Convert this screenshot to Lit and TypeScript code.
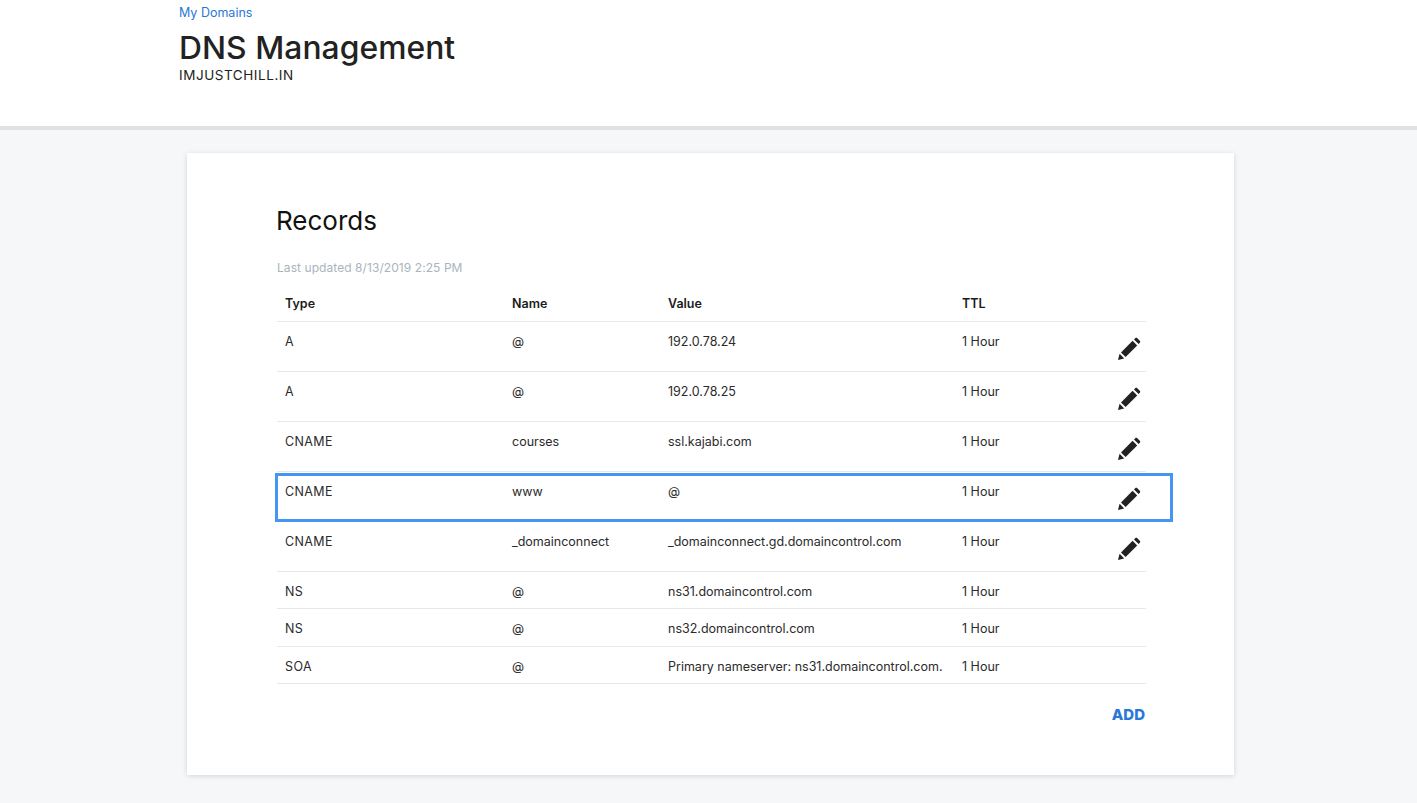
import { LitElement, html, css, svg } from "lit";
import { customElement } from "lit/decorators.js";

interface Rec { type: string; name: string; value: string; editable: boolean; focus?: boolean }

const RECORDS: Rec[] = [
  { type: "A", name: "@", value: "192.0.78.24", editable: true },
  { type: "A", name: "@", value: "192.0.78.25", editable: true },
  { type: "CNAME", name: "courses", value: "ssl.kajabi.com", editable: true },
  { type: "CNAME", name: "www", value: "@", editable: true, focus: true },
  { type: "CNAME", name: "_domainconnect", value: "_domainconnect.gd.domaincontrol.com", editable: true },
  { type: "NS", name: "@", value: "ns31.domaincontrol.com", editable: false },
  { type: "NS", name: "@", value: "ns32.domaincontrol.com", editable: false },
  { type: "SOA", name: "@", value: "Primary nameserver: ns31.domaincontrol.com.", editable: false },
];

const pencil = svg`<svg class="pencil" width="24" height="24" viewBox="0 0 24 24" aria-hidden="true">
  <path fill="#222" d="M1 23l1.6-6.2 4.6 4.6z"/>
  <path fill="#222" d="M4 15.4L15.6 3.8l4.6 4.6L8.6 20z"/>
  <path fill="#222" d="M17 2.4l1.2-1.2c.6-.6 1.5-.6 2.1 0l2.5 2.5c.6.6.6 1.5 0 2.1L21.600 7z"/>
</svg>`;

@customElement("app-root")
export class AppRoot extends LitElement {
  static styles = css`
    :host {
      display: block;
      min-height: 803px;
      background: #f5f7f8;
      font-family: "Inter", "Liberation Sans", sans-serif;
      color: #222;
    }
    .top {
      box-sizing: border-box;
      height: 130px;
      background: #fff;
      border-bottom: 4px solid #dfe1e3;
      padding: 5px 0 0 179px;
    }
    .crumb {
      display: block;
      font-size: 12.5px;
      line-height: 16px;
      color: #2a78d6;
      text-decoration: none;
    }
    h1 {
      margin: 7px 0 0;
      font-size: 31.8px;
      line-height: 39px;
      font-weight: 550;
      color: #222;
      letter-spacing: 0.05px;
    }
    .domain {
      font-size: 13.5px;
      line-height: 16px;
      letter-spacing: 0.55px;
      color: #222;
    }
    .card {
      box-sizing: border-box;
      width: 1047px;
      height: 622px;
      margin: 23px 0 0 187px;
      padding: 49px 88px 0 90px;
      background: #fff;
      box-shadow: 0 1px 5px rgba(0, 0, 0, 0.14);
    }
    h2 {
      margin: 0 0 0 -1px;
      font-size: 26px;
      line-height: 38px;
      font-weight: 400;
      color: #111;
    }
    .updated {
      margin-top: 20px;
      font-size: 12px;
      line-height: 16px;
      letter-spacing: 0.07px;
      color: #a9b4bc;
    }
    .row {
      position: relative;
      display: grid;
      grid-template-columns: 227px 156px 294px 1fr 28px;
      box-sizing: border-box;
      padding: 0 0 0 8px;
      border-bottom: 1px solid #e8e8e8;
      font-size: 12.5px;
      line-height: 16px;
      color: #2b2b2b;
    }
    .head {
      height: 38px;
      padding-top: 12px;
      margin-top: 8px;
      font-weight: 600;
      color: #1b1b1b;
    }
    .tall { height: 50px; padding-top: 12px; }
    .short { height: 37.4px; padding-top: 12px; }
    .cell { white-space: nowrap; }
    .type { letter-spacing: 0.4px; }
    .edit {
      display: flex;
      justify-content: flex-end;
      padding-top: 3px;
      padding-right: 5px;
    }
    .pencil { display: block; flex: none; }
    .focus {
      position: absolute;
      left: -2px;
      right: -27px;
      top: 1px;
      bottom: -1px;
      border: 3px solid #4694f3;
      pointer-events: none;
    }
    .actions { display: flex; justify-content: flex-end; margin-top: 22px; padding-right: 1px; }
    .add {
      font-size: 15px;
      line-height: 18px;
      font-weight: 800;
      color: #2a78d6;
      text-decoration: none;
    }
  `;

  private renderRow(r: Rec) {
    return html`<div class="row ${r.editable ? "tall" : "short"}">
      <div class="cell type">${r.type}</div>
      <div class="cell">${r.name}</div>
      <div class="cell">${r.value}</div>
      <div class="cell">1 Hour</div>
      <div class="edit">${r.editable ? pencil : ""}</div>
      ${r.focus ? html`<div class="focus"></div>` : ""}
    </div>`;
  }

  render() {
    return html`
      <header class="top">
        <a class="crumb" href="#">My Domains</a>
        <h1>DNS Management</h1>
        <div class="domain">IMJUSTCHILL.IN</div>
      </header>
      <section class="card">
        <h2>Records</h2>
        <div class="updated">Last updated 8/13/2019 2:25 PM</div>
        <div class="row head">
          <div class="cell">Type</div>
          <div class="cell">Name</div>
          <div class="cell">Value</div>
          <div class="cell">TTL</div>
          <div></div>
        </div>
        ${RECORDS.map((r) => this.renderRow(r))}
        <div class="actions"><a class="add" href="#">ADD</a></div>
      </section>
    `;
  }
}
